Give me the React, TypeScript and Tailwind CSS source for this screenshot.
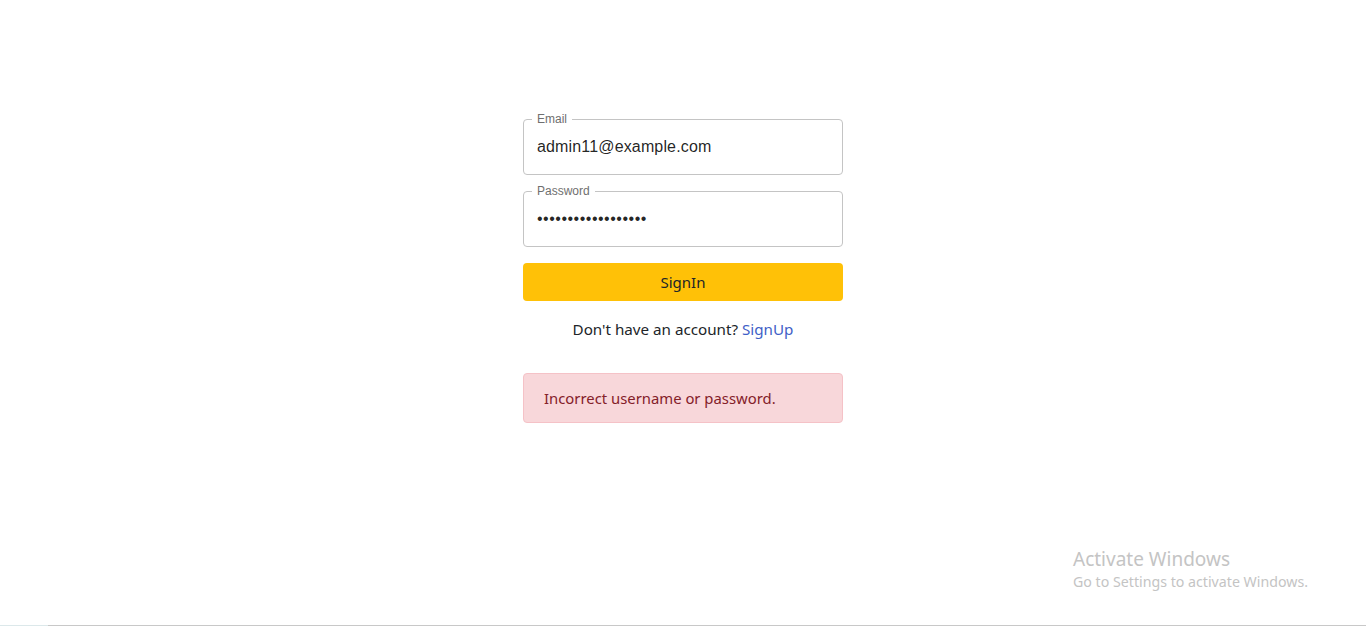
import React from "react";

const ui = "font-['Segoe_UI','Noto_Sans','Liberation_Sans',sans-serif]";

function OutlinedField({ label, value, type, tracking }: { label: string; value: string; type: string; tracking?: string }) {
  return (
    <div className="relative h-[56px] w-full">
      <input
        type={type}
        defaultValue={value}
        readOnly
        className={`relative z-10 h-full w-full bg-transparent px-[14px] pb-[1px] font-['Liberation_Sans',Arial,sans-serif] text-[16px] text-[rgba(0,0,0,0.87)] outline-none ${tracking ?? ""}`}
      />
      <fieldset className="pointer-events-none absolute inset-x-0 bottom-0 top-[-5px] m-0 rounded-[4px] border border-[#c4c4c4] px-[8px] text-left">
        <legend className="h-[11px] px-[5px] font-['Liberation_Sans',Arial,sans-serif] text-[12px] leading-[11px] text-[#6f6f6f]">
          {label}
        </legend>
      </fieldset>
    </div>
  );
}

export default function App() {
  return (
    <div className="relative h-[626px] w-full overflow-hidden bg-white">
      <div className="flex justify-center pt-[119px]">
        <form className="flex w-[320px] flex-col">
          <OutlinedField label="Email" value="admin11@example.com" type="email" tracking="tracking-[0.15px]" />
          <div className="h-[16px]" />
          <OutlinedField label="Password" value="admin11@example.co" type="password" tracking="tracking-[0.5px]" />
          <button
            type="button"
            className={`mt-[16px] h-[38px] w-full rounded-[4px] bg-[#ffc107] text-[15px] text-[#212529] ${ui}`}
          >
            SignIn
          </button>
          <p className={`mt-[16px] text-center text-[15.2px] leading-[24px] text-[#212529] ${ui}`}>
            Don't have an account? <a className="text-[#3f5fc7]">SignUp</a>
          </p>
          <div
            className={`mt-[32px] rounded-[4px] border border-[#f5c2c7] bg-[#f8d7da] px-[20px] py-[12px] text-[14.85px] leading-[24px] text-[#842029] ${ui}`}
          >
            Incorrect username or password.
          </div>
        </form>
      </div>

      <div className={`absolute left-[1073px] top-[546px] text-[#c4c4c4] ${ui}`}>
        <div className="text-[19px] leading-[26px]">Activate Windows</div>
        <div className="text-[14.2px] leading-[20px]">Go to Settings to activate Windows.</div>
      </div>

      <div className="absolute bottom-0 left-0 flex h-[1px] w-full">
        <div className="w-[48px] bg-[#dce8ea]" />
        <div className="flex-1 bg-[#c8c8c8]" />
      </div>
    </div>
  );
}
